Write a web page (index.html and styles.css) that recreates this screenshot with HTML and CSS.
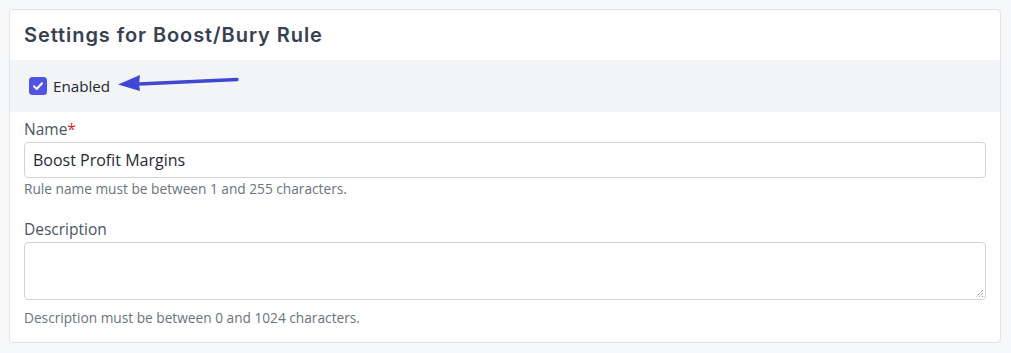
FILE: index.html
```html
<!DOCTYPE html>
<html lang="en">
<head>
<meta charset="utf-8">
<title>Settings for Boost/Bury Rule</title>
<link rel="stylesheet" href="styles.css">
</head>
<body>
<div class="card">
  <div class="card-header">
    <h2 class="title">Settings for Boost/Bury Rule</h2>
  </div>
  <div class="enabled-band">
    <label class="check-label">
      <span class="checkbox">
        <svg width="18" height="18" viewBox="0 0 18 18"><path d="M5 9.3l2.7 2.7L13 6.3" fill="none" stroke="#fff" stroke-width="2" stroke-linecap="round" stroke-linejoin="round"/></svg>
      </span>
      <span class="check-text">Enabled</span>
    </label>
    <svg class="annot-arrow" width="140" height="30" viewBox="0 0 140 30">
      <path d="M20 22.5 L129 17.5" stroke="#4047d0" stroke-width="3.5" stroke-linecap="round" fill="none"/>
      <path d="M10 24.5 L32 15 L31 24 L32 31 Z" fill="#4047d0" transform="translate(0,-2)"/>
    </svg>
  </div>
  <div class="card-body">
    <div class="field">
      <label class="field-label">Name<span class="req">*</span></label>
      <div class="input">Boost Profit Margins</div>
      <p class="help first-help">Rule name must be between 1 and 255 characters.</p>
    </div>
    <div class="field">
      <label class="field-label">Description</label>
      <div class="textarea">
        <svg class="grip" width="10" height="10" viewBox="0 0 10 10"><path d="M9 2L2 9M9 5L5 9M9 8L8 9" stroke="#6b6b6b" stroke-width="1" fill="none" stroke-dasharray="1 1"/></svg>
      </div>
      <p class="help second-help">Description must be between 0 and 1024 characters.</p>
    </div>
  </div>
</div>
</body>
</html>
```

FILE: styles.css
```css
* { box-sizing: border-box; }
html, body { margin: 0; }
body {
  background: #f7f8fa;
  padding: 9px 10px 0 9px;
  font-family: "Open Sans", "Noto Sans", sans-serif;
  color: #1f2937;
}
.card {
  background: #fff;
  border: 1px solid #e1e3e9;
  border-radius: 4px;
  width: 992px;
}
.card-header {
  height: 50px;
  display: flex;
  align-items: center;
  padding-left: 14px;
}
.title {
  margin: 0;
  font-family: "Inter", "Noto Sans", sans-serif;
  font-size: 20px;
  font-weight: 600;
  color: #374151;
  letter-spacing: 0.93px;
}
.enabled-band {
  position: relative;
  height: 52px;
  background: #f3f4f6;
  display: flex;
  align-items: center;
  padding-left: 19px;
}
.check-label {
  display: flex;
  align-items: center;
  gap: 6px;
}
.checkbox {
  width: 18px;
  height: 18px;
  border-radius: 3.5px;
  background: #5153e3;
  display: flex;
}
.check-text {
  font-size: 15.2px;
  color: #1f2937;
}
.annot-arrow {
  position: absolute;
  left: 98px;
  top: 2px;
}
.card-body {
  padding: 7px 14px 16px 14px;
}
.field-label {
  display: block;
  font-size: 15.5px;
  line-height: 20px;
  color: #4b5563;
}
.req { color: #dc2626; }
.input {
  margin-top: 3px;
  height: 36px;
  border: 1px solid #d1d3db;
  border-radius: 4px;
  padding: 0 8px;
  display: flex;
  align-items: center;
  font-size: 16px;
  color: #1f2937;
}
.textarea {
  position: relative;
  margin-top: 3px;
  height: 58px;
  border: 1px solid #d1d3db;
  border-radius: 4px;
}
.grip {
  position: absolute;
  right: 1px;
  bottom: 1px;
}
.help {
  margin: 0;
  font-size: 13.7px;
  line-height: 16px;
  color: #6b7280;
}
.first-help { margin-top: 3px; margin-bottom: 22px; }
.second-help { margin-top: 10px; }
```
